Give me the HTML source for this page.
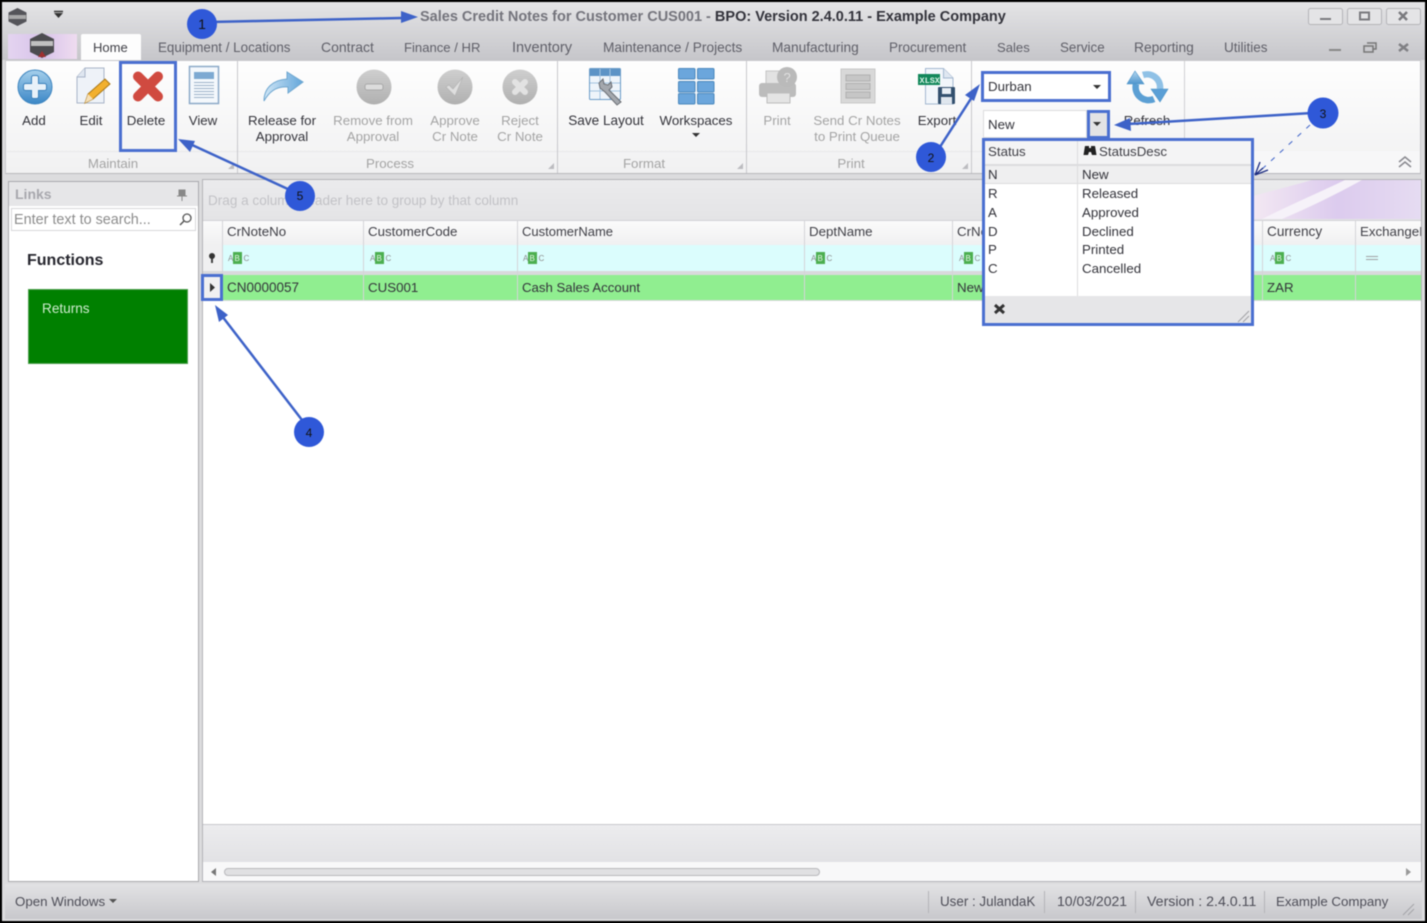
<!DOCTYPE html>
<html><head><meta charset="utf-8"><style>
html,body{margin:0;padding:0;width:1427px;height:923px;overflow:hidden;background:#000}
#a{position:absolute;left:0;top:0;width:1427px;height:923px;overflow:hidden;font-family:"Liberation Sans",sans-serif;font-size:13.3px;color:#33333a;filter:blur(.4px)}
.b{position:absolute}
.t{position:absolute;white-space:nowrap;line-height:16px;margin-top:1px}
.c{position:absolute;white-space:nowrap;line-height:16px;text-align:center;transform:translateX(-50%);margin-top:1px}
.g{color:#a4a4a4}
.tab{color:#5f5f68}
.hc{color:#3f3f46}
svg{position:absolute;left:0;top:0}
</style></head><body><div id="a">
<!-- window -->
<div class="b" style="left:2px;top:2px;width:1423px;height:919px;background:#dcdcde"></div>
<div class="b" style="left:2px;top:2px;width:1423px;height:58px;background:linear-gradient(#e4e4e6,#c6c6ca)"></div>
<!-- logo button -->
<div class="b" style="left:8px;top:34px;width:69px;height:25px;background:linear-gradient(90deg,#e4d4f0,#d8c4ea 50%,#efdcf0)"></div>
<!-- home tab -->
<div class="b" style="left:81px;top:34px;width:60px;height:27px;background:#fdfdfd;border-radius:2px 2px 0 0"></div>
<!-- ribbon -->
<div class="b" style="left:5px;top:60px;width:1416px;height:114px;background:linear-gradient(#fefefe,#f1f1f2);border:1px solid #c8c8cc;border-bottom-color:#b8b8bc;box-sizing:border-box"></div>
<div class="b" style="left:7px;top:151px;width:1412px;height:1px;background:#e8e8ea"></div>
<div class="b" style="left:237px;top:61px;width:1px;height:112px;background:#c8c8cc"></div>
<div class="b" style="left:557px;top:61px;width:1px;height:112px;background:#c8c8cc"></div>
<div class="b" style="left:746px;top:61px;width:1px;height:112px;background:#c8c8cc"></div>
<div class="b" style="left:971px;top:61px;width:1px;height:112px;background:#c8c8cc"></div>
<div class="b" style="left:1184px;top:61px;width:1px;height:112px;background:#d0d0d4"></div>
<div class="b" style="left:1186px;top:151px;width:234px;height:22px;background:#f7f7f8"></div>
<!-- left panel -->
<div class="b" style="left:8px;top:181px;width:191px;height:701px;background:#fff;border:1px solid #a9a9ad;box-sizing:border-box"></div>
<div class="b" style="left:9px;top:182px;width:189px;height:24px;background:#e6e6e8"></div>
<div class="b" style="left:11px;top:208px;width:185px;height:23px;background:#fff;border:1px solid #d8d8da;box-sizing:border-box"></div>
<div class="b" style="left:28px;top:289px;width:160px;height:75px;background:#008000;border:1px solid #4d9f4d;box-sizing:border-box"></div>
<!-- grid -->
<div class="b" style="left:202px;top:179px;width:1220px;height:703px;background:#fff;border:1px solid #b4b4b8;box-sizing:border-box"></div>
<div class="b" style="left:203px;top:180px;width:1218px;height:40px;background:linear-gradient(#ebebed,#e4e4e6)"></div>
<svg class="b" width="1427" height="923">
<defs><linearGradient id="p" x1="0" x2="1"><stop offset="0" stop-color="#f3e8f3"/><stop offset=".5" stop-color="#dccbee"/><stop offset="1" stop-color="#e6dcf2"/></linearGradient></defs>
<path d="M1253 196 C1275 190 1295 185 1312 180 L1421 180 L1421 219 L1253 219Z" fill="url(#p)"/>
<path d="M1262 219 C1290 205 1320 192 1345 180 L1362 180 C1335 195 1310 207 1282 219Z" fill="#f6f2f9"/>
</svg>
<div class="b" style="left:203px;top:220px;width:1218px;height:25px;background:linear-gradient(#fbfbfb,#f0f0f1);border-top:1px solid #d2d2d6;box-sizing:border-box"></div>
<div class="b" style="left:222px;top:245px;width:1199px;height:27px;background:#dbfdfd"></div>
<div class="b" style="left:203px;top:245px;width:19px;height:27px;background:#f0f0f1"></div>
<div class="b" style="left:203px;top:271px;width:1218px;height:4px;background:#d9d9dc"></div>
<div class="b" style="left:222px;top:275px;width:1199px;height:25px;background:#90ee90"></div>
<div class="b" style="left:203px;top:275px;width:19px;height:25px;background:#f0f0f1"></div>
<div class="b" style="left:203px;top:300px;width:1218px;height:1px;background:#d8d8da"></div>
<!-- col lines -->
<div class="b" style="left:222px;top:220px;width:1px;height:80px;background:#d4d4d8"></div>
<div class="b" style="left:363px;top:220px;width:1px;height:80px;background:#d4d4d8"></div>
<div class="b" style="left:517px;top:220px;width:1px;height:80px;background:#d4d4d8"></div>
<div class="b" style="left:804px;top:220px;width:1px;height:80px;background:#d4d4d8"></div>
<div class="b" style="left:952px;top:220px;width:1px;height:80px;background:#d4d4d8"></div>
<div class="b" style="left:1262px;top:220px;width:1px;height:80px;background:#d4d4d8"></div>
<div class="b" style="left:1355px;top:220px;width:1px;height:80px;background:#d4d4d8"></div>
<!-- grid bottom -->
<div class="b" style="left:203px;top:824px;width:1218px;height:1px;background:#c8c8cc"></div>
<div class="b" style="left:203px;top:825px;width:1218px;height:37px;background:linear-gradient(#ececee,#e2e2e5)"></div>
<div class="b" style="left:203px;top:862px;width:1218px;height:19px;background:#f8f8f9"></div>
<div class="b" style="left:224px;top:868px;width:596px;height:8px;background:#e0e0e2;border:1px solid #b8b8bc;border-radius:4px;box-sizing:border-box"></div>
<!-- status -->
<div class="b" style="left:5px;top:884px;width:1417px;height:35px;background:linear-gradient(#e2e2e4,#c8c8cc)"></div>
<div class="b" style="left:928px;top:891px;width:1px;height:22px;background:#b4b4b8"></div>
<div class="b" style="left:1044px;top:891px;width:1px;height:22px;background:#b4b4b8"></div>
<div class="b" style="left:1135px;top:891px;width:1px;height:22px;background:#b4b4b8"></div>
<div class="b" style="left:1264px;top:891px;width:1px;height:22px;background:#b4b4b8"></div>

<!-- title -->
<div class="t" style="left:420px;top:8px;font-size:14.5px;font-weight:bold;color:#74747c">Sales Credit Notes for Customer CUS001 - <span style="color:#33333b">BPO: Version 2.4.0.11 - Example Company</span></div>
<!-- tabs -->
<div class="t" style="left:93px;top:39px;font-size:13px;color:#3f3f46">Home</div>
<div class="t tab" style="left:158px;top:39px;font-size:13.4px">Equipment / Locations</div>
<div class="t tab" style="left:321px;top:38px;font-size:14px">Contract</div>
<div class="t tab" style="left:404px;top:39px;font-size:13.1px">Finance / HR</div>
<div class="t tab" style="left:512px;top:39px;font-size:14.6px">Inventory</div>
<div class="t tab" style="left:603px;top:39px;font-size:13.7px">Maintenance / Projects</div>
<div class="t tab" style="left:772px;top:39px;font-size:13.7px">Manufacturing</div>
<div class="t tab" style="left:889px;top:39px;font-size:13.5px">Procurement</div>
<div class="t tab" style="left:997px;top:39px;font-size:13.1px">Sales</div>
<div class="t tab" style="left:1060px;top:39px;font-size:13.4px">Service</div>
<div class="t tab" style="left:1134px;top:39px;font-size:13.8px">Reporting</div>
<div class="t tab" style="left:1224px;top:39px;font-size:13.5px">Utilities</div>
<!-- ribbon labels -->
<div class="c" style="left:34px;top:112px">Add</div>
<div class="c" style="left:91px;top:112px">Edit</div>
<div class="c" style="left:146px;top:112px">Delete</div>
<div class="c" style="left:203px;top:112px">View</div>
<div class="c" style="left:282px;top:112px">Release for<br>Approval</div>
<div class="c g" style="left:373px;top:112px">Remove from<br>Approval</div>
<div class="c g" style="left:455px;top:112px">Approve<br>Cr Note</div>
<div class="c g" style="left:520px;top:112px">Reject<br>Cr Note</div>
<div class="c" style="left:606px;top:112px;font-size:13.6px">Save Layout</div>
<div class="c" style="left:696px;top:112px">Workspaces</div>
<div class="c g" style="left:777px;top:112px">Print</div>
<div class="c g" style="left:857px;top:112px">Send Cr Notes<br>to Print Queue</div>
<div class="c" style="left:937px;top:112px">Export</div>
<div class="c" style="left:1147px;top:112px">Refresh</div>
<div class="c g" style="left:113px;top:155px">Maintain</div>
<div class="c g" style="left:390px;top:155px">Process</div>
<div class="c g" style="left:644px;top:155px">Format</div>
<div class="c g" style="left:851px;top:155px">Print</div>
<!-- left text -->
<div class="t" style="left:15px;top:185px;font-size:14px;font-weight:bold;color:#a8a8ae">Links</div>
<div class="t" style="left:14px;top:211px;font-size:14.4px;color:#8c8c8c">Enter text to search...</div>
<div class="t" style="left:27px;top:252px;font-size:16px;font-weight:bold;color:#26262e">Functions</div>
<div class="t" style="left:42px;top:300px;font-size:13.6px;color:#cfeccf">Returns</div>
<!-- grid text -->
<div class="t" style="left:208px;top:192px;font-size:13.55px;color:#c2c2c6">Drag a column header here to group by that column</div>
<div class="t hc" style="left:227px;top:223px">CrNoteNo</div>
<div class="t hc" style="left:368px;top:223px">CustomerCode</div>
<div class="t hc" style="left:522px;top:223px;font-size:13px">CustomerName</div>
<div class="t hc" style="left:809px;top:223px">DeptName</div>
<div class="t hc" style="left:957px;top:223px">CrNo</div>
<div class="t hc" style="left:1267px;top:223px;font-size:13.6px">Currency</div>
<div class="t hc" style="left:1360px;top:223px;width:61px;overflow:hidden">ExchangeRate</div>
<div class="t" style="left:227px;top:279px;font-size:13.5px">CN0000057</div>
<div class="t" style="left:368px;top:279px">CUS001</div>
<div class="t" style="left:522px;top:279px;font-size:13.2px">Cash Sales Account</div>
<div class="t" style="left:957px;top:279px">New</div>
<div class="t" style="left:1267px;top:279px">ZAR</div>
<!-- ABC filter icons -->
<svg class="b" width="1427" height="923" font-family="Liberation Sans" font-size="8">
<g><rect x="233" y="252" width="9" height="12" fill="#4caf50"/><text x="228" y="261" fill="#8a8a8a">A</text><text x="234.500" y="261" fill="#e8f8e8">B</text><text x="243.500" y="261" fill="#8a8a8a">C</text></g>
<g><rect x="375" y="252" width="9" height="12" fill="#4caf50"/><text x="370" y="261" fill="#8a8a8a">A</text><text x="376.500" y="261" fill="#e8f8e8">B</text><text x="385.500" y="261" fill="#8a8a8a">C</text></g>
<g><rect x="528" y="252" width="9" height="12" fill="#4caf50"/><text x="523" y="261" fill="#8a8a8a">A</text><text x="529.500" y="261" fill="#e8f8e8">B</text><text x="538.500" y="261" fill="#8a8a8a">C</text></g>
<g><rect x="816" y="252" width="9" height="12" fill="#4caf50"/><text x="811" y="261" fill="#8a8a8a">A</text><text x="817.500" y="261" fill="#e8f8e8">B</text><text x="826.500" y="261" fill="#8a8a8a">C</text></g>
<g><rect x="964" y="252" width="9" height="12" fill="#4caf50"/><text x="959" y="261" fill="#8a8a8a">A</text><text x="965.500" y="261" fill="#e8f8e8">B</text><text x="974.500" y="261" fill="#8a8a8a">C</text></g>
<g><rect x="1275" y="252" width="9" height="12" fill="#4caf50"/><text x="1270" y="261" fill="#8a8a8a">A</text><text x="1276.500" y="261" fill="#e8f8e8">B</text><text x="1285.500" y="261" fill="#8a8a8a">C</text></g>
<path d="M1366 256.500h12M1366 259.500h12" stroke="#a0a0a4" stroke-width="1"/>
<!-- filter pin -->
<circle cx="212" cy="256" r="3" fill="#333"/><path d="M212 257v6" stroke="#333" stroke-width="1.800"/>
<!-- row arrow -->
<path d="M210 283l5 4.500-5 4.500z" fill="#333"/>
<!-- scroll arrows -->
<path d="M216 868l-5 4 5 4z" fill="#777"/>
<path d="M1406 868l5 4-5 4z" fill="#999"/>
<!-- qat glyph -->
<path d="M54 13h9l-4.500 5z" fill="#333"/><path d="M54 11.500h9" stroke="#333" stroke-width="1.500"/>
<!-- window controls -->
<g fill="#e4e4e6" stroke="#b4b4b8"><rect x="1308.500" y="8.500" width="34" height="16" rx="2"/><rect x="1347.500" y="8.500" width="34" height="16" rx="2"/><rect x="1386.500" y="8.500" width="34" height="16" rx="2"/></g>
<path d="M1320 19h11" stroke="#7a7a7e" stroke-width="2"/>
<rect x="1360" y="12.500" width="9" height="7" fill="none" stroke="#7a7a7e" stroke-width="2"/>
<path d="M1399 12l8 8M1407 12l-8 8" stroke="#7a7a7e" stroke-width="2.500"/>
<path d="M1329 50h12" stroke="#888" stroke-width="2"/>
<path d="M1367 43h9v6h-3M1364 46h9v6h-9z" fill="none" stroke="#777" stroke-width="1.500"/>
<path d="M1399 44l9 7M1408 44l-9 7" stroke="#808084" stroke-width="2.500"/>
<!-- title logo -->
<path d="M17.500 8l9 4.500v9l-9 4.500-9-4.500v-9z" fill="#55555a"/><rect x="9" y="15" width="17" height="4" fill="#a8a8a8"/>
<path d="M42 33l12 6v13l-12 6-12-6v-13z" fill="#4c4c50"/><rect x="31" y="41" width="22" height="5" fill="#c0c0c0"/><path d="M38 57l4-6 4 6z" fill="#a03030"/>
<defs>
<linearGradient id="bl" x1="0" y1="0" x2="0" y2="1"><stop offset="0" stop-color="#a6d0ec"/><stop offset="1" stop-color="#3a86c6"/></linearGradient>
<linearGradient id="gr" x1="0" y1="0" x2="0" y2="1"><stop offset="0" stop-color="#cfcfcf"/><stop offset="1" stop-color="#b0b0b0"/></linearGradient>
<linearGradient id="ar" x1="0" y1="0" x2="1" y2="0"><stop offset="0" stop-color="#d0e6f6"/><stop offset="1" stop-color="#63a6da"/></linearGradient>
<linearGradient id="rf" x1="0" y1="0" x2="0" y2="1"><stop offset="0" stop-color="#b4d8f0"/><stop offset="1" stop-color="#4f95cd"/></linearGradient>
</defs>
<!-- Add -->
<circle cx="35" cy="87" r="17" fill="url(#bl)" stroke="#3f86c0"/>
<path d="M31.500 77.500a2 2 0 0 1 2-2h3a2 2 0 0 1 2 2v6h6a2 2 0 0 1 2 2v3a2 2 0 0 1-2 2h-6v6a2 2 0 0 1-2 2h-3a2 2 0 0 1-2-2v-6h-6a2 2 0 0 1-2-2v-3a2 2 0 0 1 2-2h6z" fill="#e8f1f9" stroke="#3a80bb" stroke-width="1"/>
<!-- Edit: folded corner top-left -->
<path d="M85 68h19v35H77V77z" fill="#eef2f8" stroke="#a8b4c8"/>
<path d="M85 68v9h-8" fill="#dfe6f0" stroke="#a8b4c8"/>
<path d="M85 103l3-9 17-15 5 5-17 15z" fill="#f2b02e" stroke="#a97716"/><path d="M85 103l3-9 5 5z" fill="#f5dfb8"/>
<!-- Delete -->
<path d="M138 76.500L158 96.500M158 76.500L138 96.500" stroke="#d04a40" stroke-width="10" stroke-linecap="round" fill="none"/>
<!-- View -->
<rect x="189.500" y="66.500" width="29" height="37" fill="#f4f8fc" stroke="#8ca9c8" stroke-width="1.500"/>
<rect x="194" y="72" width="20" height="7" fill="#7da9d2"/>
<path d="M194 82.500h20M194 85.500h20M194 88.500h20M194 91.500h20M194 94.500h20M194 97.500h20" stroke="#9db2c8"/>
<!-- Release -->
<path d="M264 101c0-13 9-21 23-22v-7l16 10-15 11v-6c-10-1-18 3-24 14z" fill="url(#ar)" stroke="#6fa7d0"/>
<!-- grey circles -->
<circle cx="374" cy="87" r="17.500" fill="url(#gr)"/><rect x="365" y="84" width="18" height="6" rx="2" fill="#dcdcdc" stroke="#a8a8a8"/>
<circle cx="455" cy="87" r="17.500" fill="url(#gr)"/><path d="M446 87l3-2 4 4 10-12-8 19z" fill="#dedede" stroke="#b4b4b4" stroke-width=".7"/>
<circle cx="520" cy="87" r="17.500" fill="url(#gr)"/><path d="M515 82l10 10M525 82l-10 10" stroke="#e2e2e2" stroke-width="6" stroke-linecap="round"/>
<!-- Save layout -->
<rect x="589.500" y="68.500" width="31" height="31" fill="#eef4fa" stroke="#6a9bc8" rx="1"/>
<rect x="590" y="69" width="30" height="7" fill="#5c93c6"/>
<path d="M600 69v30M610 69v30M590 83h30M590 91h30" stroke="#a4c4e0"/>
<path d="M605 92l-5-4-1-5 4-4 1 5 4 1 3-3 1 5-3 3 12 12-4 3z" fill="#a4a8ae" stroke="#6a6e74" stroke-width="1"/>
<!-- Workspaces -->
<g fill="#6ba6dc" stroke="#4a88bd"><rect x="678.500" y="68.500" width="16.500" height="10.500" rx="1"/><rect x="697.500" y="68.500" width="16.500" height="10.500" rx="1"/><rect x="678.500" y="81.500" width="16.500" height="10.500" rx="1"/><rect x="697.500" y="81.500" width="16.500" height="10.500" rx="1"/><rect x="678.500" y="93.500" width="16.500" height="10.500" rx="1"/><rect x="697.500" y="93.500" width="16.500" height="10.500" rx="1"/></g>
<path d="M692 133h8l-4 4z" fill="#333"/>
<!-- Print -->
<rect x="766" y="71" width="24" height="14" fill="#e2e2e2" stroke="#c4c4c4"/>
<rect x="759" y="83" width="37" height="14" rx="3" fill="#bcbcbc"/>
<rect x="767" y="93" width="23" height="10" fill="#e4e4e4" stroke="#bcbcbc"/>
<circle cx="787" cy="77" r="10" fill="#bababa"/><text x="783.500" y="82" font-size="13" fill="#e0e0e0">?</text>
<!-- Send -->
<rect x="841" y="69" width="34" height="34" fill="#d8d8d8" stroke="#c8c8c8"/>
<rect x="846" y="75" width="24" height="6" fill="#c6c6c6" stroke="#b0b0b0"/><rect x="846" y="83.500" width="24" height="6" fill="#c6c6c6" stroke="#b0b0b0"/><rect x="846" y="92" width="24" height="6" fill="#c6c6c6" stroke="#b0b0b0"/>
<!-- Export -->
<path d="M925.500 68.500h18l9.500 9.500v26h-27.500z" fill="#f2f6fb" stroke="#a4b8d0"/>
<path d="M943.500 68.500v9.500h9.500" fill="#dfe7f1" stroke="#a4b8d0"/>
<rect x="918" y="74" width="22" height="11" fill="#12875a"/><text x="919.500" y="83" font-family="Liberation Mono" font-size="8.500" font-weight="bold" fill="#d8f4e6">XLSX</text>
<rect x="938" y="87" width="17" height="17" fill="#33506e" rx="1"/><rect x="942" y="88" width="9" height="6" fill="#e8eef5"/><rect x="941" y="97" width="11" height="7" fill="#dfe6ee"/>
<!-- Refresh -->
<g fill="none" stroke-width="6.500"><path d="M1136 84A13 13 0 0 0 1154 99" stroke="#5b9fd4"/><path d="M1160 89A13 13 0 0 0 1143 75" stroke="#8fc1e6"/></g>
<path d="M1135 71l9 13h-17z" fill="url(#rf)" stroke="#4a93c8" stroke-width=".6"/>
<path d="M1160 102l-9-13h17z" fill="#5a9fd6" stroke="#4a93c8" stroke-width=".6"/>
<!-- corner grips -->
<path d="M234 163v6h-6zM554 163v6h-6zM743 163v6h-6zM968 163v6h-6z" fill="#bcbcc0"/>
<!-- collapse -->
<path d="M1399 162l6-5 6 5M1399 167l6-5 6 5" fill="none" stroke="#8a8a90" stroke-width="1.500"/>
<!-- pin -->
<path d="M179 190h6v6h-6zM182 196v5M177 196h10" fill="#888" stroke="#888"/>
<!-- search -->
<circle cx="187" cy="218" r="4" fill="none" stroke="#555" stroke-width="1.300"/><path d="M184 221l-4 4" stroke="#555" stroke-width="1.500"/>
<!-- open windows arrow -->
<path d="M109 899h8l-4 4z" fill="#555"/>
<!-- status grip -->
<path d="M1403 915l11-11M1408 915l6-6" stroke="#a4a4a8"/>
</svg>
<!-- status text -->
<div class="t" style="left:15px;top:893px;color:#4d4d57">Open Windows</div>
<div class="t" style="left:940px;top:893px;font-size:13.4px;color:#4d4d57">User : JulandaK</div>
<div class="t" style="left:1057px;top:892px;font-size:14px;color:#4d4d57">10/03/2021</div>
<div class="t" style="left:1147px;top:893px;font-size:14.2px;color:#4d4d57">Version : 2.4.0.11</div>
<div class="t" style="left:1276px;top:893px;color:#4d4d57">Example Company</div>
<!-- combos -->
<div class="b" style="left:983px;top:73px;width:125px;height:27px;background:#fff"></div>
<div class="t" style="left:988px;top:78px">Durban</div>
<div class="b" style="left:983px;top:110px;width:104px;height:28px;background:#fff;border:1px solid #dcdcde;box-sizing:border-box"></div>
<div class="t" style="left:988px;top:116px">New</div>
<div class="b" style="left:1088px;top:111px;width:21px;height:26px;background:#e3e3e5"></div>
<!-- popup -->
<div class="b" style="left:982px;top:138px;width:272px;height:188px;background:#fff;border:3px solid #4a6fd0;box-sizing:border-box"></div>
<div class="b" style="left:985px;top:141px;width:266px;height:23px;background:#f4f4f5;border-bottom:2px solid #dcdcde"></div>
<div class="b" style="left:985px;top:166px;width:266px;height:17px;background:#efeff0;border-bottom:1px solid #dcdcde"></div>
<div class="b" style="left:1077px;top:141px;width:1px;height:155px;background:#dcdcde"></div>
<div class="b" style="left:985px;top:296px;width:266px;height:27px;background:#e6e6e8"></div>
<div class="t hc" style="left:988px;top:143px">Status</div>
<div class="t hc" style="left:1099px;top:143px">StatusDesc</div>
<div class="t" style="left:988px;top:166px">N</div><div class="t" style="left:1082px;top:166px">New</div>
<div class="t" style="left:988px;top:185px">R</div><div class="t" style="left:1082px;top:185px">Released</div>
<div class="t" style="left:988px;top:204px">A</div><div class="t" style="left:1082px;top:204px">Approved</div>
<div class="t" style="left:988px;top:223px">D</div><div class="t" style="left:1082px;top:223px">Declined</div>
<div class="t" style="left:988px;top:241px">P</div><div class="t" style="left:1082px;top:241px">Printed</div>
<div class="t" style="left:988px;top:260px">C</div><div class="t" style="left:1082px;top:260px">Cancelled</div>
<!-- annotations -->
<div class="b" style="left:119px;top:61px;width:58px;height:91px;border:3px solid #4a6fd0;box-sizing:border-box"></div>
<div class="b" style="left:981px;top:71px;width:130px;height:31px;border:3px solid #4a6fd0;box-sizing:border-box"></div>
<div class="b" style="left:1087px;top:110px;width:23px;height:29px;border:3px solid #4a6fd0;box-sizing:border-box"></div>
<div class="b" style="left:201px;top:274px;width:22px;height:27px;border:3px solid #4a6fd0;box-sizing:border-box"></div>
<svg class="b" width="1427" height="923" font-family="Liberation Sans" font-size="14">
<path d="M1093 85h8l-4 4zM1093 122h8l-4 4z" fill="#333"/>
<!-- binoculars -->
<path d="M1085 146h4v2h2v-2h4l1.500 9h-4.500l-1-3h-2l-1 3h-4.500z" fill="#222"/>
<!-- popup close -->
<path d="M995 305l9 8M1004 305l-9 8" stroke="#333" stroke-width="3"/>
<path d="M1238 322l11-11M1243 322l6-6" stroke="#a0a0a4"/>
<g stroke="#3d62c8" stroke-width="2.500" fill="#3d62c8">
<path d="M210 22L402 18" fill="none"/><path d="M418 17l-17-6v12z" stroke="none"/>
<path d="M938 150L972 97" fill="none"/><path d="M980 84l-15 11 9 6z" stroke="none"/>
<path d="M1312 113L1128 124" fill="none"/><path d="M1114 125l16-7 1 13z" stroke="none"/>
<path d="M302 420L222 316" fill="none"/><path d="M215 305l4 17 9-7z" stroke="none"/>
<path d="M290 190L190 144" fill="none"/><path d="M178 139l12 13 5-11z" stroke="none"/>
</g>
<path d="M1310 125L1261 170" stroke="#3d62c8" fill="none" stroke-dasharray="5 7"/>
<path d="M1255 175l5-13M1255 175l13-5M1255 175l8-7" stroke="#1a2a80" stroke-width="1.300" fill="none"/>
<g fill="#2f58d8"><circle cx="202" cy="24" r="15"/><circle cx="931" cy="157" r="15"/><circle cx="1323" cy="113" r="15.500"/><circle cx="309" cy="432" r="15"/><circle cx="300" cy="196" r="15"/></g>
<g fill="#111" text-anchor="middle"><text x="202" y="29">1</text><text x="931" y="162" font-size="12">2</text><text x="1323" y="118" font-size="12">3</text><text x="309" y="437" font-size="12">4</text><text x="300" y="200" font-size="12">5</text></g>
</svg>
</div></body></html>
